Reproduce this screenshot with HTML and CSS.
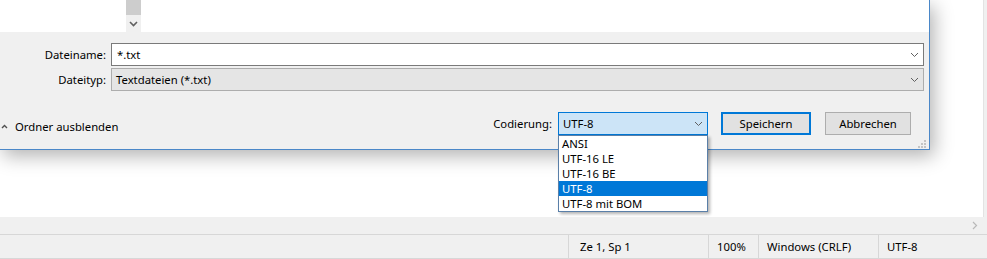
FILE: index.html
```html
<!DOCTYPE html>
<html lang="de">
  <head>
    <meta charset="UTF-8" />
    <title>Speichern unter</title>
    <link rel="stylesheet" href="styles.css">
  </head>
  <body>
    <div class="notepad">
      <div class="editor">
        <div class="editor-text"></div>
        <div class="vscroll"></div>
      </div>
      <div class="hscroll">
        <div class="hscroll-track"></div>
        <div class="hscroll-btn">
          <svg width="6" height="9" viewBox="0 0 6 9"><polyline points="1,1 4.5,4.5 1,8" fill="none" stroke="#b9b9b9" stroke-width="1.2"/></svg>
        </div>
        <div class="corner"></div>
      </div>
      <div class="statusbar">
        <div class="status-fill"></div>
        <div class="status-cell pos">Ze 1, Sp 1</div>
        <div class="status-cell zoom">100%</div>
        <div class="status-cell eol">Windows (CRLF)</div>
        <div class="status-cell enc">UTF-8</div>
      </div>
    </div>

    <div class="dialog">
      <div class="browser">
        <div class="nav-pane"></div>
        <div class="nav-scroll">
          <div class="thumb"></div>
          <svg class="scroll-down" width="9" height="6" viewBox="0 0 9 6"><polyline points="1,1 4.5,4.5 8,1" fill="none" stroke="#606060" stroke-width="1.6"/></svg>
        </div>
        <div class="file-list"></div>
      </div>

      <div class="form">
        <div class="fields">
          <label class="field-label">Dateiname:</label>
          <div class="combo combo-edit">
            <span>*.txt</span>
            <svg width="9" height="6" viewBox="0 0 9 6"><polyline points="1,1 4.5,4.5 8,1" fill="none" stroke="#606060" stroke-width="1"/></svg>
          </div>
          <label class="field-label">Dateityp:</label>
          <div class="combo combo-list">
            <span>Textdateien (*.txt)</span>
            <svg width="9" height="6" viewBox="0 0 9 6"><polyline points="1,1 4.5,4.5 8,1" fill="none" stroke="#606060" stroke-width="1"/></svg>
          </div>
        </div>

        <div class="footer">
          <div class="toggle">
            <svg width="7" height="5" viewBox="0 0 7 5"><polyline points="1,4 3.5,1.5 6,4" fill="none" stroke="#505050" stroke-width="1.4"/></svg>
            <span>Ordner ausblenden</span>
          </div>
          <div class="actions">
            <label class="enc-label">Codierung:</label>
            <div class="combo combo-open">
              <span>UTF-8</span>
              <svg width="9" height="6" viewBox="0 0 9 6"><polyline points="1,1 4.5,4.5 8,1" fill="none" stroke="#606060" stroke-width="1"/></svg>
            </div>
            <button class="btn btn-default">Speichern</button>
            <button class="btn">Abbrechen</button>
          </div>
        </div>
      </div>

      <svg class="grip" width="8" height="8" viewBox="0 0 8 8">
        <rect x="6" y="0" width="2" height="2" fill="#c4c4c4"/>
        <rect x="3" y="3" width="2" height="2" fill="#c4c4c4"/>
        <rect x="6" y="3" width="2" height="2" fill="#c4c4c4"/>
        <rect x="0" y="6" width="2" height="2" fill="#c4c4c4"/>
        <rect x="3" y="6" width="2" height="2" fill="#c4c4c4"/>
        <rect x="6" y="6" width="2" height="2" fill="#c4c4c4"/>
      </svg>
    </div>

    <ul class="dropdown">
      <li>ANSI</li>
      <li>UTF-16 LE</li>
      <li>UTF-16 BE</li>
      <li class="selected">UTF-8</li>
      <li>UTF-8 mit BOM</li>
    </ul>
  </body>
</html>
```

FILE: styles.css
```css
* {
  box-sizing: border-box;
}

body {
  margin: 0;
  width: 987px;
  height: 259px;
  overflow: hidden;
  position: relative;
  background: #fff;
  font-family: "Noto Sans", "Open Sans", sans-serif;
  font-size: 11.3px;
  color: #000;
}

/* notepad window behind the dialog */
.notepad {
  height: 259px;
  display: flex;
  flex-direction: column;
}

.editor {
  flex: 1;
  display: flex;
  background: #fff;
}

.editor-text {
  flex: 1;
}

.vscroll {
  width: 4px;
  background: #f0f0f0;
  border-left: 1px solid #e3e3e3;
}

.hscroll {
  height: 17px;
  display: flex;
  background: #f0f0f0;
}

.hscroll-track {
  flex: 1;
}

.hscroll-btn {
  width: 17px;
  display: flex;
  align-items: center;
  justify-content: center;
}

.corner {
  width: 4px;
}

.statusbar {
  height: 25px;
  display: flex;
  background: #f0f0f0;
  border-top: 1px solid #d7d7d7;
  border-bottom: 1px solid #d7d7d7;
}

.status-fill {
  width: 568px;
}

.status-cell {
  display: flex;
  align-items: center;
  padding-left: 11px;
  border-left: 1px solid #d7d7d7;
}

.status-cell.pos {
  width: 140px;
}

.status-cell.zoom {
  width: 50px;
  padding-left: 8px;
}

.status-cell.eol {
  width: 120px;
  padding-left: 8px;
}

.status-cell.enc {
  flex: 1;
  padding-left: 8px;
}

/* save dialog */
.dialog {
  position: absolute;
  left: -1px;
  top: 0;
  width: 931px;
  height: 150px;
  background: #f0f0f0;
  border: 1px solid #4a87c8;
  border-top: none;
  box-shadow: 4px 6px 18px rgba(0, 0, 0, 0.3);
}

.browser {
  height: 32px;
  display: flex;
  background: #fff;
}

.nav-pane {
  width: 126px;
}

.nav-scroll {
  width: 15px;
  background: #f0f0f0;
  display: flex;
  flex-direction: column;
  align-items: center;
}

.thumb {
  width: 15px;
  height: 15px;
  background: #cdcdcd;
}

.scroll-down {
  margin-top: 6px;
}

.file-list {
  flex: 1;
}

.form {
  padding: 11px 5px 0 0;
}

.fields {
  display: grid;
  grid-template-columns: 106px 1fr;
  column-gap: 5px;
  row-gap: 2px;
}

.field-label {
  display: flex;
  align-items: center;
  justify-content: flex-end;
}

.combo {
  height: 23px;
  display: flex;
  align-items: center;
  justify-content: space-between;
  padding: 0 4px 0 4px;
  border: 1px solid #7a7a7a;
  background: #fff;
}

.combo-edit {
  padding-left: 5px;
}

.combo-list {
  background: #e5e5e5;
  border-color: #adadad;
}

.footer {
  margin-top: 21px;
  height: 23px;
  display: flex;
  align-items: center;
  justify-content: space-between;
}

.toggle {
  display: flex;
  align-items: center;
  gap: 7px;
  padding-left: 1px;
  margin-top: 6px;
}

.actions {
  display: flex;
  align-items: center;
  padding-right: 13px;
}

.enc-label {
  margin-right: 6px;
}

.combo-open {
  width: 150px;
  background: #cce4f7;
  border-color: #0078d7;
  margin-right: 13px;
}

.btn {
  height: 23px;
  width: 86px;
  padding: 0;
  font-family: inherit;
  font-size: inherit;
  color: #000;
  background: #e1e1e1;
  border: 1px solid #adadad;
}

.btn-default {
  width: 90px;
  border: 2px solid #0078d7;
  margin-right: 14px;
}

.grip {
  position: absolute;
  right: 3px;
  bottom: 1px;
}

/* open encoding list */
.dropdown {
  position: absolute;
  left: 558px;
  top: 135px;
  width: 150px;
  margin: 0;
  padding: 0;
  list-style: none;
  background: #fff;
  border: 1px solid #5a7fa8;
  box-shadow: 2px 2px 3px rgba(0, 0, 0, 0.3);
}

.dropdown li {
  height: 15px;
  line-height: 15px;
  padding-left: 3px;
}

.dropdown .selected {
  background: #0078d7;
  color: #fff;
}
```
